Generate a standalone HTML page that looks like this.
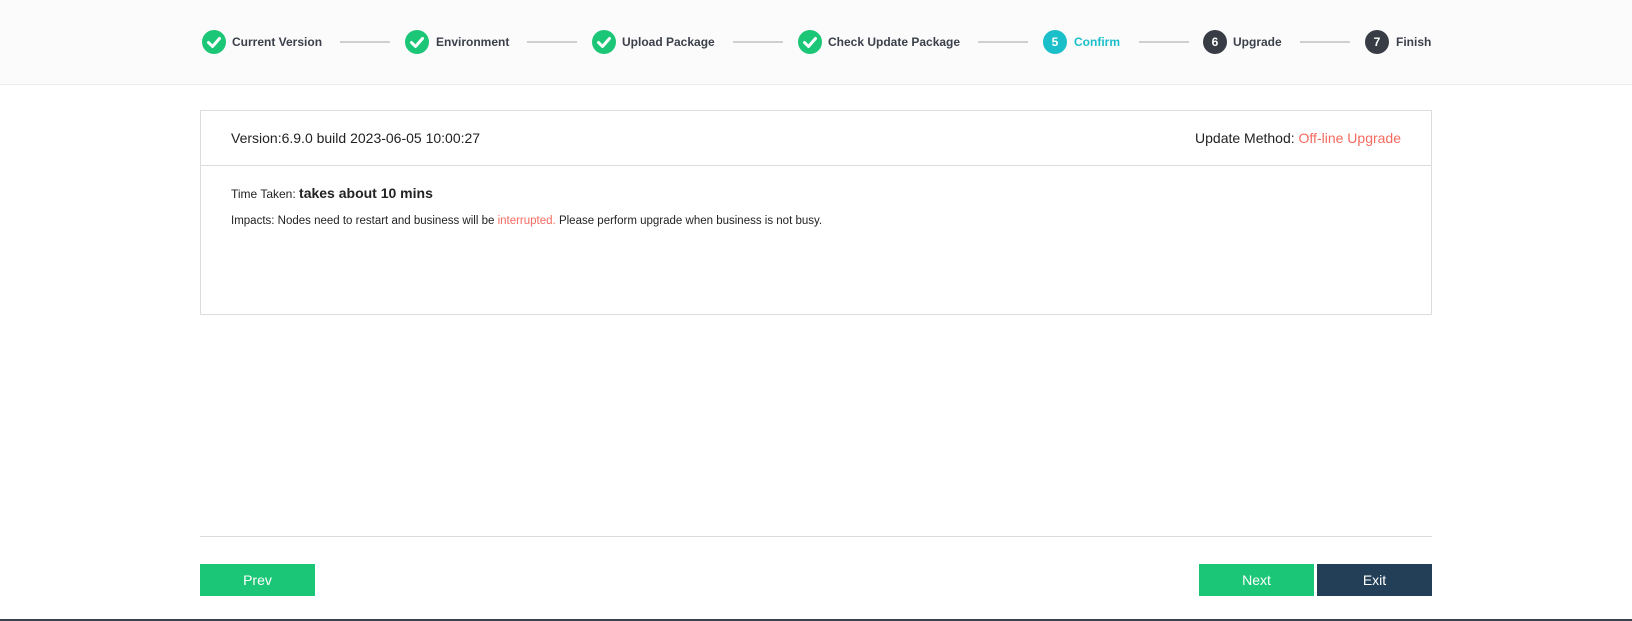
<!DOCTYPE html>
<html><head><meta charset="utf-8"><style>
*{margin:0;padding:0;box-sizing:border-box}
body{width:1632px;height:621px;background:#fff;font-family:"Liberation Sans",Arial,sans-serif;position:relative;overflow:hidden;color:#222}
.hdr{position:absolute;left:0;top:0;width:1632px;height:85px;background:#fbfbfb;border-bottom:1px solid #ececec}
.c{position:absolute;top:30px;width:24px;height:24px;border-radius:50%;color:#fff;font-size:12px;font-weight:bold;text-align:center;line-height:24px}
.g{background:#1cc677}.t{background:#1bbfc9}.d{background:#383d45}
.lb{position:absolute;top:35px;font-size:12px;font-weight:bold;color:#3a3f4a}
.ln{position:absolute;top:41px;height:2px;width:50px;background:#cfcfcf}
.card{position:absolute;left:200px;top:110px;width:1232px;height:205px;border:1px solid #dcdcdc}
.btn{position:absolute;top:564px;height:32px;width:115px;color:#fff;font-size:14px;text-align:center;line-height:32px}
</style></head><body>
<div class="hdr">
<div class="c g" style="left:202px"><svg width="24" height="24"><path d="M6.5 12.5l4 4 7-8" stroke="#fff" stroke-width="3" fill="none" stroke-linecap="round" stroke-linejoin="round"/></svg></div>
<div class="lb" style="left:232px">Current Version</div>
<div class="ln" style="left:340px"></div>
<div class="c g" style="left:405px"><svg width="24" height="24"><path d="M6.5 12.5l4 4 7-8" stroke="#fff" stroke-width="3" fill="none" stroke-linecap="round" stroke-linejoin="round"/></svg></div>
<div class="lb" style="left:436px">Environment</div>
<div class="ln" style="left:527px"></div>
<div class="c g" style="left:592px"><svg width="24" height="24"><path d="M6.5 12.5l4 4 7-8" stroke="#fff" stroke-width="3" fill="none" stroke-linecap="round" stroke-linejoin="round"/></svg></div>
<div class="lb" style="left:622px">Upload Package</div>
<div class="ln" style="left:733px"></div>
<div class="c g" style="left:798px"><svg width="24" height="24"><path d="M6.5 12.5l4 4 7-8" stroke="#fff" stroke-width="3" fill="none" stroke-linecap="round" stroke-linejoin="round"/></svg></div>
<div class="lb" style="left:828px">Check Update Package</div>
<div class="ln" style="left:978px"></div>
<div class="c t" style="left:1043px">5</div>
<div class="lb" style="left:1074px;color:#1bbfc9">Confirm</div>
<div class="ln" style="left:1139px"></div>
<div class="c d" style="left:1203px">6</div>
<div class="lb" style="left:1233px">Upgrade</div>
<div class="ln" style="left:1300px"></div>
<div class="c d" style="left:1365px">7</div>
<div class="lb" style="left:1396px">Finish</div>
</div>
<div class="card">
<div style="position:absolute;left:0;top:54px;width:100%;height:1px;background:#dcdcdc"></div>
<div style="position:absolute;left:30px;top:19px;font-size:14px">Version:6.9.0 build 2023-06-05 10:00:27</div>
<div style="position:absolute;right:30px;top:19px;font-size:14px">Update Method: <span style="color:#f56a5f">Off-line Upgrade</span></div>
<div style="position:absolute;left:30px;top:74px;font-size:12px">Time Taken: <b style="font-size:14px">takes about 10 mins</b></div>
<div style="position:absolute;left:30px;top:104px;font-size:11.5px">Impacts: Nodes need to restart and business will be <span style="color:#f56a5f">interrupted.</span> Please perform upgrade when business is not busy.</div>
</div>
<div style="position:absolute;left:200px;top:536px;width:1232px;height:1px;background:#dcdcdc"></div>
<div class="btn" style="left:200px;background:#1cc677">Prev</div>
<div class="btn" style="left:1199px;background:#1cc677">Next</div>
<div class="btn" style="left:1317px;background:#233f57">Exit</div>
<div style="position:absolute;left:0;top:619px;width:1632px;height:2px;background:#3a4450"></div>
</body></html>
